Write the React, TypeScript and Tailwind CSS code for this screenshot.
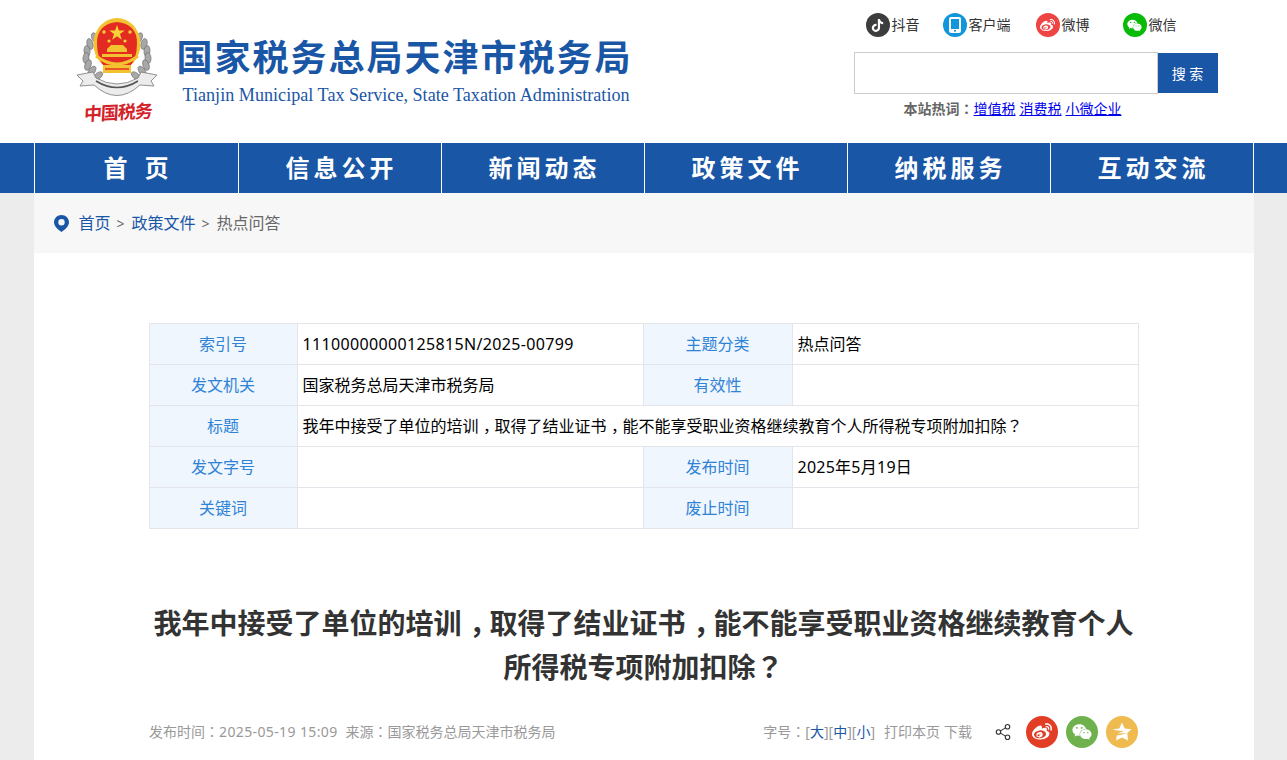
import { FaTiktok, FaWeibo, FaWeixin } from "react-icons/fa6";
import { Share2 } from "lucide-react";

const NAV_ITEMS = ["首 页", "信息公开", "新闻动态", "政策文件", "纳税服务", "互动交流"];

// leaf positions for one side of the wreath, mirrored for the other
const LEAVES = [
  [19, 20, -25],
  [14, 26, -15],
  [11, 33, -5],
  [10, 40, 5],
  [12, 47, 20],
  [16, 53, 35],
  [22, 58, 50],
];

function Emblem() {
  return (
    <svg width="84" height="82" viewBox="0 0 84 82" className="shrink-0">
      {LEAVES.map(([x, y, r]) => (
        <g key={y}>
          <ellipse cx={x} cy={y} rx="3" ry="5.5" fill="#a8a8a8" stroke="#666" strokeWidth="0.6" transform={`rotate(${r} ${x} ${y})`} />
          <ellipse cx={82 - x} cy={y} rx="3" ry="5.5" fill="#a8a8a8" stroke="#666" strokeWidth="0.6" transform={`rotate(${-r} ${82 - x} ${y})`} />
        </g>
      ))}
      {/* ribbon */}
      <path d="M1 57 L17 54 L20 60 Q41 72 62 60 L65 54 L81 57 L75 63 L78 68 L64 67 Q41 88 18 67 L4 68 L7 63 Z" fill="#ececec" stroke="#777" strokeWidth="0.8" />
      <path d="M20 63 Q41 76 62 63" fill="none" stroke="#555" strokeWidth="1.6" />
      {/* shield */}
      <ellipse cx="41" cy="26" rx="23.5" ry="26" fill="#f2c230" />
      <path d="M21 25 Q21 6 41 4 Q61 6 61 25 Q61 42 53 49 L29 49 Q21 42 21 25 Z" fill="#e42b22" />
      <path d="M41 7 l1.9 5.6 h5.8 l-4.7 3.5 1.8 5.6 -4.8 -3.5 -4.8 3.5 1.8 -5.6 -4.7 -3.5 h5.8 Z" fill="#f6d23a" />
      <circle cx="28" cy="14" r="1.7" fill="#f6d23a" />
      <circle cx="54" cy="14" r="1.7" fill="#f6d23a" />
      <circle cx="33" cy="23" r="1.6" fill="#f6d23a" />
      <circle cx="49" cy="23" r="1.6" fill="#f6d23a" />
      <path d="M31 34 H51 V31 L47 27 H35 L31 31 Z M26 39 H56 V36 H26 Z" fill="#f2c230" />
      <path d="M20 38 Q41 54 62 38" fill="none" stroke="#f2c230" strokeWidth="3" />
      <path d="M27 47 H55 V55 H27 Z" fill="#f2c230" />
      <path d="M29 51 H53" stroke="#e42b22" strokeWidth="1.4" />
    </svg>
  );
}

function TabletIcon() {
  return (
    <svg width="14" height="16" viewBox="0 0 14 16">
      <rect x="1" y="0" width="12" height="16" rx="2" fill="#fff" />
      <rect x="3" y="2" width="8" height="10" fill="#1296db" />
      <rect x="6" y="13" width="2" height="1.6" fill="#1296db" />
    </svg>
  );
}

function PinIcon() {
  return (
    <svg width="15" height="17" viewBox="0 0 15 17" className="shrink-0">
      <path
        fillRule="evenodd"
        d="M7.5 0 C11.6 0 15 3.2 15 7.2 C15 11 11 14.6 7.5 17 C4 14.6 0 11 0 7.2 C0 3.2 3.4 0 7.5 0 Z M7.5 4 A3.2 3.2 0 1 0 7.5 10.4 A3.2 3.2 0 1 0 7.5 4 Z"
        fill="#1a56a6"
      />
    </svg>
  );
}

function QzoneIcon() {
  return (
    <svg width="22" height="22" viewBox="0 0 22 22">
      <path
        d="M11 1.5 L13.7 7.6 L20.5 8.3 L16.3 12 L6.2 12.6 L13 9.9 L5.6 9.6 L1.5 8.3 L8.3 7.6 Z M16.3 12 L17 19.5 L11 16.5 L5 19.5 L5.8 14.6 L10 13.7 Z"
        fill="#fff"
      />
    </svg>
  );
}

// centered full-width punctuation, as in the reference
function P({ children }: { children: string }) {
  return <span className="font-['Noto_Sans_CJK_TC',sans-serif] leading-[0]">{children}</span>;
}

// the comma sits on the baseline but is centered in its box
function Comma() {
  return (
    <span className="ml-[0.28em] mr-[0.22em] font-['Noto_Sans_CJK_KR',sans-serif] leading-[0] [font-feature-settings:'halt']">
      ，
    </span>
  );
}

function TopLink({ bg, label, icon, className }: { bg: string; label: string; icon: React.ReactNode; className: string }) {
  return (
    <a className={"flex items-center gap-[2px] text-[14px] leading-[20px] text-[#333] " + className}>
      <span className={"flex h-6 w-6 items-center justify-center rounded-full " + bg}>{icon}</span>
      {label}
    </a>
  );
}

function Header() {
  return (
    <div className="h-[143px] bg-white">
      <div className="mx-auto flex w-[1220px] justify-between">
        <div className="flex pl-[42px] pt-[18px]">
          <div className="flex w-[84px] flex-col items-center">
            <Emblem />
            <div
              className="mt-[-2px] -rotate-3 -skew-x-6 whitespace-nowrap text-[18px] font-bold leading-[26px] tracking-[-1px] text-[#d2232a]"
              style={{ fontFamily: '"Noto Sans CJK SC", serif' }}
            >
              中国税务
            </div>
          </div>
          <div className="ml-[17px]">
            <div className="mt-[16px] whitespace-nowrap text-[36px] font-bold leading-[48px] tracking-[2px] text-[#1a56a6]">
              国家税务总局天津市税务局
            </div>
            <div className="ml-[6px] mt-[2px] whitespace-nowrap font-['Liberation_Serif',serif] text-[18.15px] leading-[22px] text-[#1a56a6]">
              Tianjin Municipal Tax Service, State Taxation Administration
            </div>
          </div>
        </div>
        <div className="mr-[36px] w-[364px] pt-[13px]">
          <div className="flex pl-[12px]">
            <TopLink bg="bg-[#3d3d3d]" label="抖音" icon={<FaTiktok className="text-[13px] text-white" />} className="w-[77px]" />
            <TopLink bg="bg-[#1296db]" label="客户端" icon={<TabletIcon />} className="w-[93px]" />
            <TopLink bg="bg-[#ee4444]" label="微博" icon={<FaWeibo className="text-[15px] text-white" />} className="w-[87px]" />
            <TopLink bg="bg-[#09bb07]" label="微信" icon={<FaWeixin className="text-[15px] text-white" />} className="" />
          </div>
          <div className="mt-[15px] flex">
            <input className="h-[42px] w-[304px] border border-[#cccccc] bg-white outline-none" />
            <button className="mt-[1px] h-[40px] w-[60px] bg-[#1a56a6] text-[14px] text-white">搜 索</button>
          </div>
          <div className="mt-[5px] pl-[50px] text-[14px] leading-[20px]">
            <span className="font-bold text-[#666]">
              本站热词<P>：</P>
            </span>
            <a className="text-[#0000ee] underline">增值税</a>
            <a className="ml-[4px] text-[#0000ee] underline">消费税</a>
            <a className="ml-[4px] text-[#0000ee] underline">小微企业</a>
          </div>
        </div>
      </div>
    </div>
  );
}

function Nav() {
  return (
    <div className="h-[50px] bg-[#1a56a6]">
      <div className="mx-auto flex h-full w-[1220px] border-l border-white">
        {NAV_ITEMS.map((item, i) => (
          <a
            key={item}
            className={
              "flex h-full items-center justify-center whitespace-pre border-r border-white pl-[4px] text-[24px] font-bold tracking-[4px] text-white [word-spacing:3px] " +
              (i === 0 ? "w-[204px]" : "w-[203px]")
            }
          >
            {item}
          </a>
        ))}
      </div>
    </div>
  );
}

function Cell({
  children,
  label,
  colSpan,
  className = "",
}: {
  children?: React.ReactNode;
  label?: boolean;
  colSpan?: number;
  className?: string;
}) {
  if (label) {
    return <td className="border border-[#e3e5ea] bg-[#eff6fe] text-center text-[#2f83d6]">{children}</td>;
  }
  return (
    <td colSpan={colSpan} className={"border border-[#e3e5ea] px-[4px] text-black " + className}>
      {children}
    </td>
  );
}

function InfoTable() {
  return (
    <table className="w-[989px] table-fixed border-collapse text-[16px]">
      <colgroup>
        <col className="w-[148px]" />
        <col className="w-[346px]" />
        <col className="w-[149px]" />
        <col className="w-[346px]" />
      </colgroup>
      <tbody>
        <tr className="h-[41px]">
          <Cell label>索引号</Cell>
          <Cell className="pl-[5px] tracking-[0.35px]">11100000000125815N/2025-00799</Cell>
          <Cell label>主题分类</Cell>
          <Cell className="pl-[5px]">热点问答</Cell>
        </tr>
        <tr className="h-[41px]">
          <Cell label>发文机关</Cell>
          <Cell className="pl-[5px]">国家税务总局天津市税务局</Cell>
          <Cell label>有效性</Cell>
          <Cell />
        </tr>
        <tr className="h-[41px]">
          <Cell label>标题</Cell>
          <Cell colSpan={3} className="pl-[5px]">
            我年中接受了单位的培训<Comma />取得了结业证书<Comma />能不能享受职业资格继续教育个人所得税专项附加扣除<P>？</P>
          </Cell>
        </tr>
        <tr className="h-[41px]">
          <Cell label>发文字号</Cell>
          <Cell />
          <Cell label>发布时间</Cell>
          <Cell className="pl-[5px] tracking-[0.25px]">2025年5月19日</Cell>
        </tr>
        <tr className="h-[41px]">
          <Cell label>关键词</Cell>
          <Cell />
          <Cell label>废止时间</Cell>
          <Cell />
        </tr>
      </tbody>
    </table>
  );
}

function MetaRow() {
  return (
    <div className="mt-[25px] flex h-[34px] w-[989px] items-center justify-between text-[14px] text-[#999]">
      <div>
        发布时间<P>：</P>
        <span className="tracking-[0.38px]">2025-05-19 15:09</span>
        <span className="ml-[8px]">
          来源<P>：</P>国家税务总局天津市税务局
        </span>
      </div>
      <div className="flex items-center">
        <span>
          字号<P>：</P>[<a className="text-[#1a56a6]">大</a>][<a className="text-[#1a56a6]">中</a>][<a className="text-[#1a56a6]">小</a>]
        </span>
        <span className="ml-[9px]">打印本页</span>
        <span className="ml-[4px]">下载</span>
        <Share2 className="ml-[22px] mt-[2px] h-[18px] w-[18px] text-[#333]" strokeWidth={1.5} />
        <span className="ml-[14px] mt-[2px] flex h-8 w-8 items-center justify-center rounded-full bg-[#e23d25]">
          <FaWeibo className="text-[20px] text-white" />
        </span>
        <span className="ml-[8px] mt-[2px] flex h-8 w-8 items-center justify-center rounded-full bg-[#6fb24d]">
          <FaWeixin className="text-[20px] text-white" />
        </span>
        <span className="ml-[8px] mt-[2px] flex h-8 w-8 items-center justify-center rounded-full bg-[#efba50]">
          <QzoneIcon />
        </span>
      </div>
    </div>
  );
}

function Crumbs() {
  return (
    <div className="flex h-[60px] items-center bg-[#f7f7f7] pl-[20px] text-[16px] text-[#666]">
      <PinIcon />
      <a className="ml-[10px] text-[#1a56a6]">首页</a>
      <span className="ml-[6px] mr-[7px] text-[14px]">&gt;</span>
      <a className="text-[#1a56a6]">政策文件</a>
      <span className="ml-[6px] mr-[7px] text-[14px]">&gt;</span>
      <span>热点问答</span>
    </div>
  );
}

export default function App() {
  return (
    <div className="h-[760px] overflow-hidden bg-[#ececec] font-['Noto_Sans','Noto_Sans_CJK_SC',sans-serif]">
      <Header />
      <Nav />
      <div className="mx-auto w-[1220px] bg-white pb-[20px]">
        <Crumbs />
        <div className="flex flex-col items-center pt-[70px]">
          <InfoTable />
          <h1 className="mt-[72px] w-[990px] text-center text-[28px] font-bold leading-[44px] text-[#333]">
            我年中接受了单位的培训<Comma />取得了结业证书<Comma />能不能享受职业资格继续教育个人
            <br />
            所得税专项附加扣除<P>？</P>
          </h1>
          <MetaRow />
        </div>
      </div>
    </div>
  );
}
